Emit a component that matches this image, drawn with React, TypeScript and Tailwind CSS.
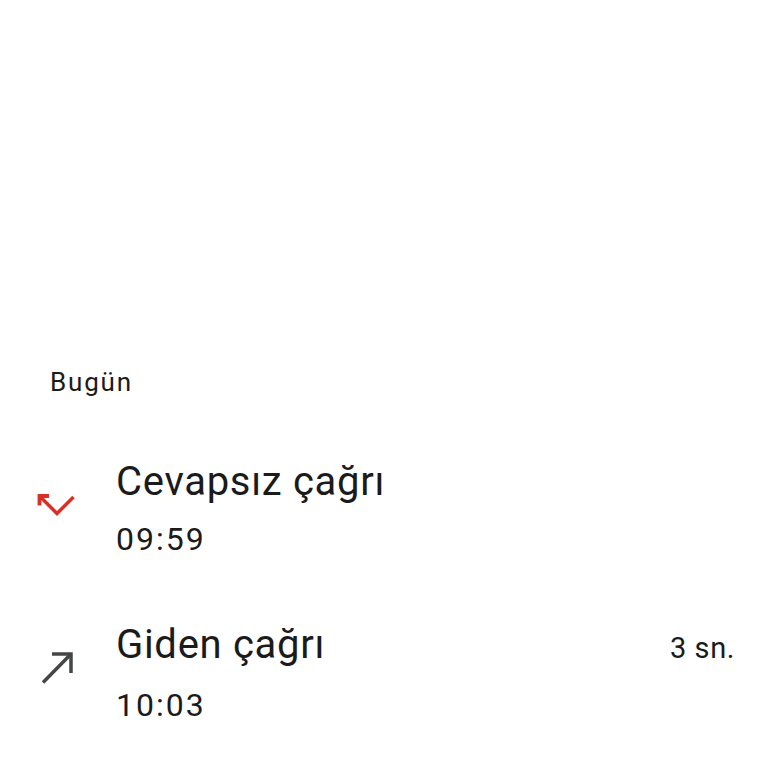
import React from 'react';

function MissedIcon() {
  return (
    <svg width="40" height="26" viewBox="0 0 40 26" fill="none" className="block">
      <path d="M13 4H3.5V13.5" stroke="#d93025" strokeWidth="3.8" />
      <path d="M3.5 4L21 21.5L37.5 5" stroke="#d93025" strokeWidth="3.5" />
    </svg>
  );
}

function OutgoingIcon() {
  return (
    <svg width="40" height="36" viewBox="0 0 40 36" fill="none" className="block">
      <path d="M16 3H35V22" stroke="#444746" strokeWidth="3.5" />
      <path d="M35 3L7 31.5" stroke="#444746" strokeWidth="3.5" />
    </svg>
  );
}

type Call = {
  title: string;
  time: string;
  duration?: string;
  icon: React.ReactNode;
};

const calls: Call[] = [
  { title: 'Cevapsız çağrı', time: '09:59', icon: <MissedIcon /> },
  { title: 'Giden çağrı', time: '10:03', duration: '3 sn.', icon: <OutgoingIcon /> },
];

export default function App() {
  return (
    <div className="w-[768px] h-[768px] bg-white text-[#1b1b1b] font-['Roboto',sans-serif] overflow-hidden">
      <div className="pt-[366px] pl-[50px] text-[26px] leading-[32px] tracking-[1.8px]">Bugün</div>
      <div className="mt-[60px] flex flex-col gap-[62px]">
        {calls.map((c) => (
          <div key={c.time} className="flex items-center pl-[36px] pr-[33px]">
            <div className="w-[40px] mb-[8px] flex">{c.icon}</div>
            <div className="ml-[40px] flex-1 flex flex-col gap-[13px]">
              <div className="flex items-baseline justify-between">
                <span className="text-[40px] leading-[48px] tracking-[0.7px]">{c.title}</span>
                {c.duration && (
                  <span className="text-[29px] leading-[48px] tracking-[0.6px]">{c.duration}</span>
                )}
              </div>
              <div className="text-[32px] leading-[40px] tracking-[2px]">{c.time}</div>
            </div>
          </div>
        ))}
      </div>
    </div>
  );
}
